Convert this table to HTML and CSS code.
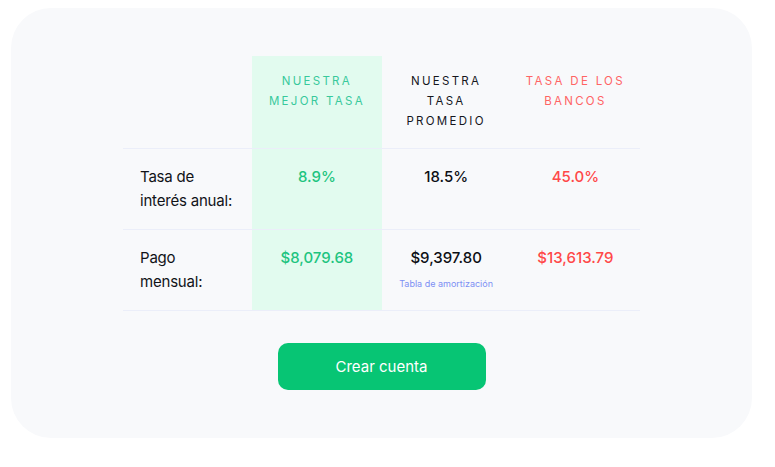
FILE: index.html
```html
<!DOCTYPE html>
<html lang="es">
<head>
<meta charset="utf-8">
<link rel="stylesheet" href="styles.css">
</head>
<body>
<div class="card">
  <div class="table">
    <div class="cell head"></div>
    <div class="cell head best th-green">NUESTRA<br>MEJOR TASA</div>
    <div class="cell head th-dark">NUESTRA<br>TASA<br>PROMEDIO</div>
    <div class="cell head th-red">TASA DE LOS<br>BANCOS</div>

    <div class="cell label">Tasa de<br>interés anual:</div>
    <div class="cell val best green">8.9%</div>
    <div class="cell val dark">18.5%</div>
    <div class="cell val red">45.0%</div>

    <div class="cell label">Pago<br>mensual:</div>
    <div class="cell val best green">$8,079.68</div>
    <div class="cell val dark">$9,397.80<a class="amort" href="#">Tabla de amortización</a></div>
    <div class="cell val red">$13,613.79</div>
  </div>
  <button class="cta">Crear cuenta</button>
</div>
</body>
</html>
```

FILE: styles.css
```css
* { box-sizing: border-box; }
html, body { margin: 0; padding: 0; background: #ffffff; }
body {
  padding: 8px 23px 0 11px;
  font-family: "Inter", "Noto Sans", sans-serif;
  color: #111318;
}
.card {
  width: 741px;
  height: 430px;
  background: #f8f9fb;
  border-radius: 40px;
  padding: 48px 0 0;
  display: flex;
  flex-direction: column;
  align-items: center;
}
.table {
  width: 517px;
  display: grid;
  grid-template-columns: repeat(4, 1fr);
}
.cell {
  border-bottom: 1px solid #ebeef9;
}
.best { background: #e2fbef; }
.head {
  padding: 15px 4px 17px;
  text-align: center;
  font-size: 11.5px;
  letter-spacing: 2.3px;
  line-height: 20px;
  font-weight: 400;
}
.th-green { color: #38c99c; }
.th-dark { color: #15171d; }
.th-red { color: #ff6464; }
.label {
  padding: 16px 0 16px 17px;
  font-size: 15px;
  line-height: 24px;
  color: #111318;
  letter-spacing: -0.2px;
}
.val {
  padding: 16px 0 16px;
  text-align: center;
  font-size: 15px;
  line-height: 24px;
  font-weight: 500;
}
.green { color: #1ec47f; }
.dark { color: #0d0f14; }
.red { color: #ff4848; }
.amort {
  display: block;
  margin-top: 7px;
  font-size: 9px;
  line-height: 14px;
  font-weight: 400;
  color: #7d90f4;
  text-decoration: none;
}
.cta {
  margin-top: 32px;
  width: 208px;
  height: 47px;
  border: 0;
  border-radius: 10px;
  background: #07c574;
  color: #ffffff;
  font-family: "Inter", "Noto Sans", sans-serif;
  font-size: 15px;
  font-weight: 400;
  cursor: pointer;
}
```
